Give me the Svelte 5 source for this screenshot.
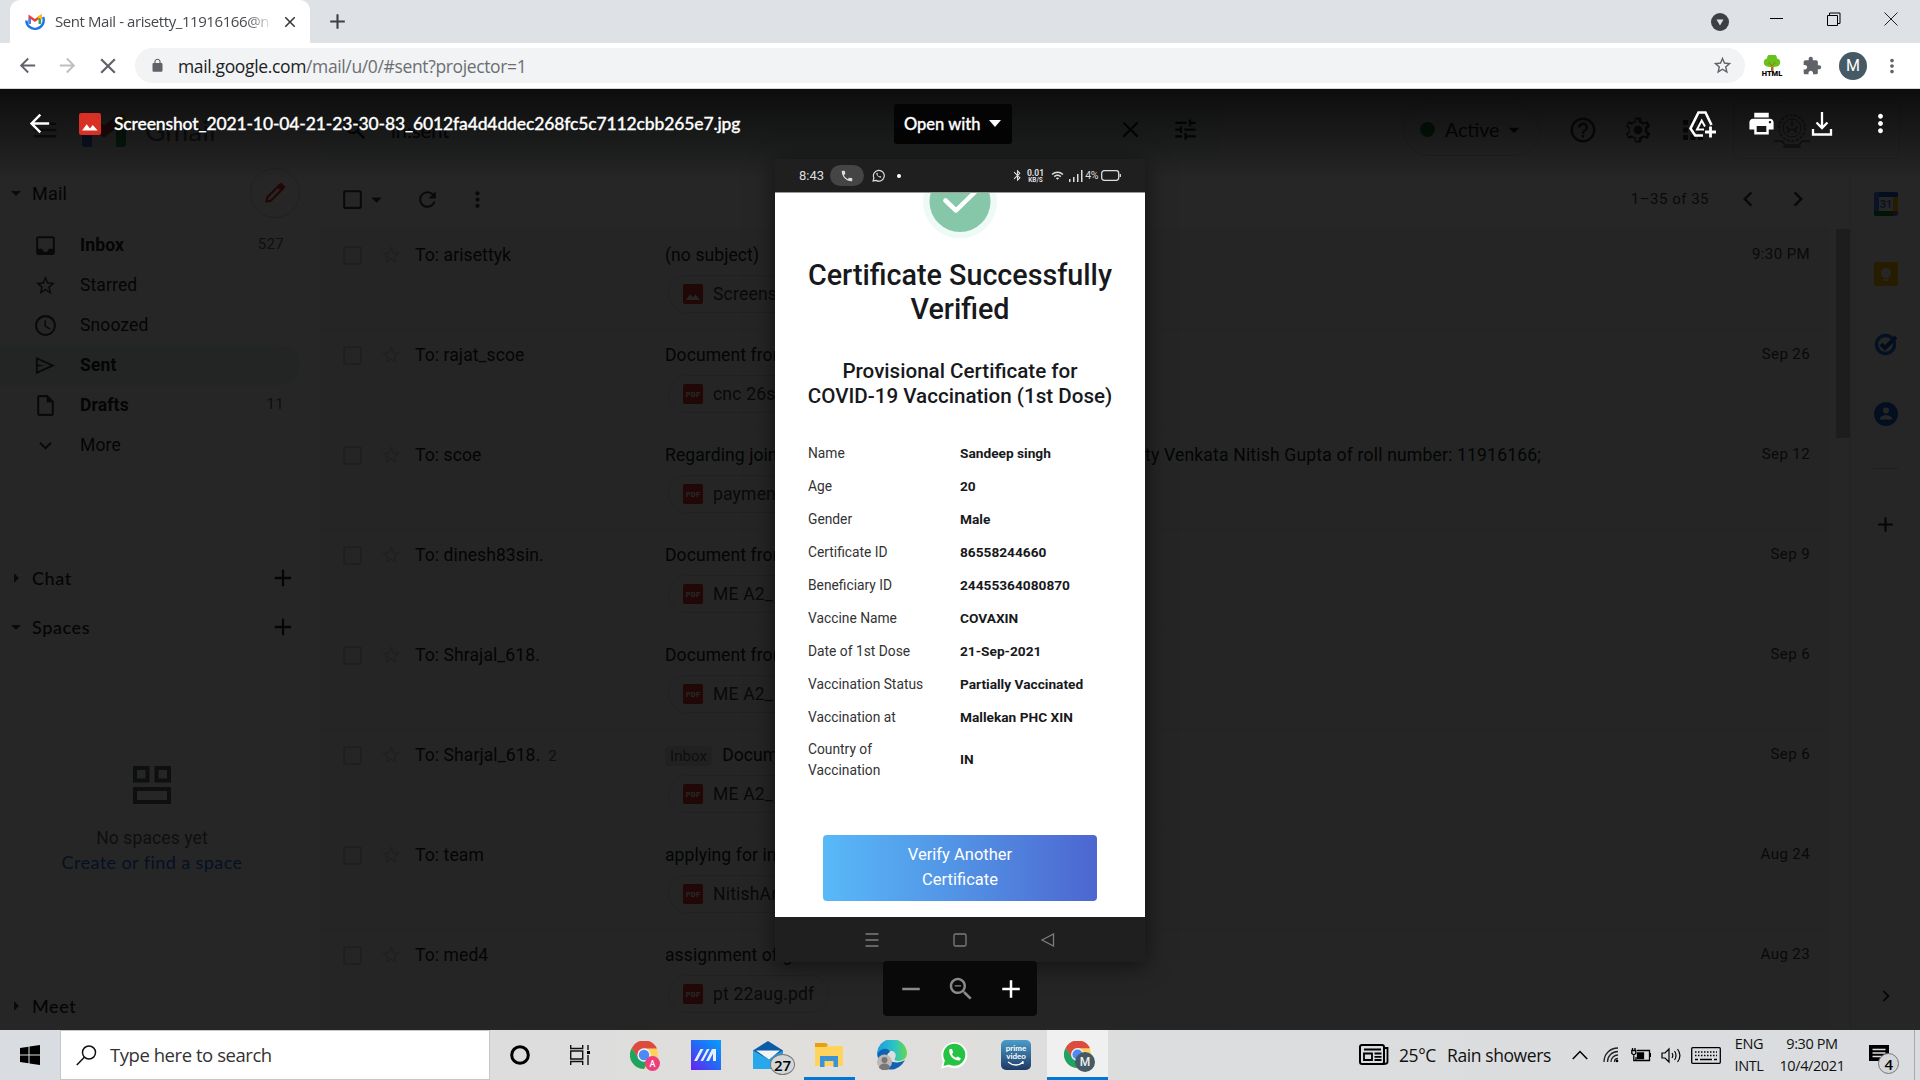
<script>
  const navItems = [
    { icon: 'inbox', label: 'Inbox', bold: true, count: '527' },
    { icon: 'star', label: 'Starred' },
    { icon: 'clock', label: 'Snoozed' },
    { icon: 'send', label: 'Sent', bold: true, active: true },
    { icon: 'draft', label: 'Drafts', bold: true, count: '11' },
    { icon: 'down', label: 'More' }
  ];

  const mails = [
    { to: 'To: arisettyk', subject: '(no subject)', file: 'Screens', img: true, date: '9:30 PM' },
    { to: 'To: rajat_scoe', subject: 'Document from', file: 'cnc 26sep', date: 'Sep 26' },
    { to: 'To: scoe', subject: 'Regarding joining', tail: 'ty Venkata Nitish Gupta of roll number: 11916166;', file: 'payment', date: 'Sep 12' },
    { to: 'To: dinesh83sin.', subject: 'Document from', file: 'ME A2_', date: 'Sep 9' },
    { to: 'To: Shrajal_618.', subject: 'Document from', file: 'ME A2_', date: 'Sep 6' },
    { to: 'To: Sharjal_618.', thread: '2', tag: 'Inbox', subject: 'Document', file: 'ME A2_', date: 'Sep 6' },
    { to: 'To: team', subject: 'applying for int', file: 'NitishAr', date: 'Aug 24' },
    { to: 'To: med4', subject: 'assignment of g', file: 'pt 22aug.pdf', short: true, date: 'Aug 23' }
  ];

  const details = [
    ['Name', 'Sandeep singh'],
    ['Age', '20'],
    ['Gender', 'Male'],
    ['Certificate ID', '86558244660'],
    ['Beneficiary ID', '24455364080870'],
    ['Vaccine Name', 'COVAXIN'],
    ['Date of 1st Dose', '21-Sep-2021'],
    ['Vaccination Status', 'Partially Vaccinated'],
    ['Vaccination at', 'Mallekan PHC XIN']
  ];

  // Single-colour glyphs on a 24-unit grid
  const glyphs = {
    back: 'M20 11H7.83l5.59-5.59L12 4l-8 8 8 8 1.41-1.41L7.83 13H20v-2z',
    forward: 'M12 4l-1.41 1.41L16.17 11H4v2h12.17l-5.58 5.59L12 20l8-8z',
    close: 'M19 6.41L17.59 5 12 10.59 6.41 5 5 6.41 10.59 12 5 17.59 6.41 19 12 13.41 17.59 19 19 17.59 13.41 12z',
    plus: 'M19 13h-6v6h-2v-6H5v-2h6V5h2v6h6v2z',
    minus: 'M19 13H5v-2h14v2z',
    lock: 'M18 8h-1V6c0-2.76-2.24-5-5-5S7 3.24 7 6v2H6c-1.1 0-2 .9-2 2v10c0 1.100.9 2 2 2h12c1.100 0 2-.9 2-2V10c0-1.100-.9-2-2-2zM8.900 6c0-1.710 1.390-3.100 3.100-3.100s3.100 1.390 3.100 3.100v2H8.900V6z',
    star: 'M22 9.240l-7.190-.62L12 2 9.190 8.630 2 9.240l5.460 4.730L5.820 21 12 17.270 18.180 21l-1.630-7.030L22 9.240zM12 15.400l-3.760 2.270 1-4.280-3.320-2.880 4.380-.38L12 6.100l1.710 4.040 4.380.38-3.320 2.880 1 4.280L12 15.400z',
    dots: 'M12 8c1.100 0 2-.9 2-2s-.9-2-2-2-2 .9-2 2 .9 2 2 2zm0 2c-1.100 0-2 .9-2 2s.9 2 2 2 2-.9 2-2-.9-2-2-2zm0 6c-1.100 0-2 .9-2 2s.9 2 2 2 2-.9 2-2-.9-2-2-2z',
    puzzle: 'M20.500 11H19V7c0-1.100-.9-2-2-2h-4V3.500C13 2.120 11.880 1 10.500 1S8 2.120 8 3.500V5H4c-1.100 0-1.990.9-1.990 2v3.800H3.500c1.490 0 2.700 1.210 2.700 2.700s-1.210 2.700-2.700 2.700H2V20c0 1.100.9 2 2 2h3.800v-1.500c0-1.490 1.210-2.700 2.700-2.700s2.700 1.210 2.700 2.700V22H17c1.100 0 2-.9 2-2v-4h1.500c1.380 0 2.500-1.120 2.500-2.500S21.880 11 20.500 11z',
    menu: 'M3 18h18v-2H3v2zm0-5h18v-2H3v2zm0-7v2h18V6H3z',
    search: 'M15.500 14h-.79l-.28-.27C15.410 12.590 16 11.110 16 9.500 16 5.910 13.090 3 9.500 3S3 5.910 3 9.500 5.910 16 9.500 16c1.610 0 3.090-.59 4.230-1.570l.27.28v.79l5 4.990L20.490 19l-4.990-5zm-6 0C7.010 14 5 11.990 5 9.500S7.010 5 9.500 5 14 7.010 14 9.500 11.990 14 9.500 14z',
    zoomout: 'M15.500 14h-.79l-.28-.27C15.410 12.590 16 11.110 16 9.500 16 5.910 13.090 3 9.500 3S3 5.910 3 9.500 5.910 16 9.500 16c1.610 0 3.090-.59 4.230-1.570l.27.28v.79l5 4.990L20.490 19l-4.990-5zm-6 0C7.010 14 5 11.990 5 9.500S7.010 5 9.500 5 14 7.010 14 9.500 11.990 14 9.500 14zM7 9h5v1H7z',
    tune: 'M3 17v2h6v-2H3zM3 5v2h10V5H3zm10 16v-2h8v-2h-8v-2h-2v6h2zM7 9v2H3v2h4v2h2V9H7zm14 4v-2H11v2h10zm-6-4h2V7h4V5h-4V3h-2v6z',
    help: 'M11 18h2v-2h-2v2zm1-16C6.480 2 2 6.480 2 12s4.480 10 10 10 10-4.480 10-10S17.520 2 12 2zm0 18c-4.410 0-8-3.590-8-8s3.590-8 8-8 8 3.590 8 8-3.590 8-8 8zm0-14c-2.210 0-4 1.790-4 4h2c0-1.100.9-2 2-2s2 .9 2 2c0 2-3 1.750-3 5h2c0-2.250 3-2.500 3-5 0-2.210-1.790-4-4-4z',
    apps: 'M4 8h4V4H4v4zm6 12h4v-4h-4v4zm-6 0h4v-4H4v4zm0-6h4v-4H4v4zm6 0h4v-4h-4v4zm6-10v4h4V4h-4zm-6 4h4V4h-4v4zm6 6h4v-4h-4v4zm0 6h4v-4h-4v4z',
    print: 'M19 8H5c-1.660 0-3 1.340-3 3v6h4v4h12v-4h4v-6c0-1.660-1.340-3-3-3zm-3 11H8v-5h8v5zm3-7c-.55 0-1-.45-1-1s.45-1 1-1 1 .45 1 1-.45 1-1 1zm-1-9H6v4h12V3z',
    inbox: 'M19 3H5c-1.100 0-2 .9-2 2v14c0 1.100.9 2 2 2h14c1.100 0 2-.9 2-2V5c0-1.100-.9-2-2-2zm0 12h-4c0 1.660-1.350 3-3 3s-3-1.340-3-3H5V5h14v10z',
    clock: 'M11.990 2C6.470 2 2 6.480 2 12s4.470 10 9.990 10C17.520 22 22 17.520 22 12S17.520 2 11.990 2zM12 20c-4.420 0-8-3.580-8-8s3.580-8 8-8 8 3.580 8 8-3.580 8-8 8zm.5-13H11v6l5.250 3.150.75-1.230-4.500-2.670z',
    send: 'M2 3v18l20-9L2 3zm2 3.100L17.100 12 4 17.900V13l7-1-7-1V6.100z',
    draft: 'M14 2H6c-1.100 0-2 .9-2 2v16c0 1.100.9 2 2 2h12c1.100 0 2-.9 2-2V8l-6-6zM6 20V4h7v5h5v11H6z',
    down: 'M7.410 8.590L12 13.170l4.590-4.580L18 10l-6 6-6-6z',
    left: 'M15.410 7.410L14 6l-6 6 6 6 1.410-1.410L10.830 12z',
    right: 'M10 6L8.590 7.410 13.170 12l-4.580 4.590L10 18l6-6z',
    square: 'M19 5v14H5V5h14m0-2H5c-1.100 0-2 .9-2 2v14c0 1.100.9 2 2 2h14c1.100 0 2-.9 2-2V5c0-1.100-.9-2-2-2z',
    refresh: 'M17.650 6.350C16.200 4.900 14.210 4 12 4c-4.420 0-7.990 3.580-7.990 8s3.570 8 7.990 8c3.730 0 6.840-2.550 7.730-6h-2.080c-.82 2.330-3.040 4-5.650 4-3.310 0-6-2.690-6-6s2.690-6 6-6c1.660 0 3.140.69 4.220 1.780L13 11h7V4l-2.350 2.350z',
    caret: 'M7 10l5 5 5-5z',
    caretRight: 'M10 17l5-5-5-5z',
    phone: 'M6.620 10.790c1.440 2.830 3.760 5.140 6.590 6.590l2.200-2.200c.27-.27.67-.36 1.020-.24 1.120.37 2.330.57 3.570.57.55 0 1 .45 1 1V20c0 .55-.45 1-1 1-9.390 0-17-7.610-17-17 0-.55.45-1 1-1h3.500c.55 0 1 .45 1 1 0 1.250.2 2.450.57 3.570.11.35.03.74-.25 1.020l-2.200 2.200z',
    bluetooth: 'M17.710 7.710L12 2h-1v7.590L6.410 5 5 6.410 10.590 12 5 17.590 6.410 19 11 14.410V22h1l5.710-5.710-4.300-4.290 4.300-4.290zM13 5.830l1.880 1.880L13 9.590V5.830zm1.880 10.460L13 18.170v-3.760l1.880 1.880z',
    wifi: 'M1 9l2 2c5-5 13-5 18 0l2-2C16.900 2.900 7.100 2.900 1 9zm8 8l3 3 3-3c-1.700-1.700-4.300-1.700-6 0zm-4-4l2 2c2.800-2.800 7.200-2.800 10 0l2-2C15.100 9.100 8.900 9.100 5 13z',
    gear: 'M19.430 12.980c.04-.32.07-.64.07-.98s-.03-.66-.07-.98l2.110-1.650c.19-.15.24-.42.12-.64l-2-3.460c-.12-.22-.39-.3-.61-.22l-2.490 1c-.52-.4-1.080-.73-1.690-.98l-.38-2.650C14.460 2.180 14.250 2 14 2h-4c-.25 0-.46.18-.49.42l-.38 2.650c-.61.25-1.170.59-1.690.98l-2.490-1c-.23-.09-.49 0-.61.22l-2 3.460c-.13.22-.07.49.12.64l2.110 1.650c-.04.32-.07.65-.07.98s.03.66.07.98l-2.110 1.650c-.19.15-.24.42-.12.64l2 3.460c.12.22.39.3.61.22l2.490-1c.52.4 1.080.73 1.690.98l.38 2.650c.03.24.24.42.49.42h4c.25 0 .46-.18.49-.42l.38-2.650c.61-.25 1.170-.59 1.690-.98l2.490 1c.23.09.49 0 .61-.22l2-3.460c.12-.22.07-.49-.12-.64l-2.110-1.650zm-2-1.700c.05.31.05.52.05.72s-.03.43-.05.73l-.14 1.130 1.970 1.520-1 1.750-2.330-.94-.89.69c-.43.32-.84.56-1.250.73l-1.060.43-.35 2.470h-1.900l-.35-2.470-1.060-.43c-.43-.18-.83-.41-1.230-.71l-.91-.7-2.330.94-1-1.750 1.970-1.520-.14-1.130c-.03-.31-.05-.54-.05-.74s.02-.43.05-.73l.14-1.130L3.550 8.640l1-1.750 2.330.94.89-.69c.43-.32.84-.56 1.250-.73l1.060-.43.35-2.470h1.900l.35 2.470 1.060.43c.43.18.83.41 1.230.71l.91.7 2.330-.94 1 1.750-1.970 1.520.14 1.130zM12 8.500a3.500 3.500 0 1 0 0 7 3.500 3.500 0 0 0 0-7z'
  };
</script>

{#snippet icon(name, size = 24)}
  <svg class="ic" width={size} height={size} viewBox="0 0 24 24" fill="currentColor"><path d={glyphs[name]} /></svg>
{/snippet}

{#snippet fileBadge(img, size = 20)}
  <svg class="ic" width={size} height={size} viewBox="0 0 20 20">
    <rect width="20" height="20" rx="2" fill="#d93025" />
    {#if img}
      <path d="M3 16l4.200-6 2.800 3.600 2.500-3.200L17 16z" fill="#fff" />
    {:else}
      <text x="10" y="13" text-anchor="middle" font-family="Roboto" font-weight="900" font-size="7.500" fill="#fff">PDF</text>
    {/if}
  </svg>
{/snippet}

{#snippet chrome(size)}
  <svg class="ic" width={size} height={size} viewBox="0 0 48 48">
    <circle cx="24" cy="24" r="24" fill="#ffd25f" />
    <path d="M24 13h22.300A24 24 0 0 0 3.200 12l11 19z" fill="#dd4b3e" />
    <path d="M3.200 12A24 24 0 0 0 24 48l10-18.500L24 35 14.500 30z" fill="#1ea362" />
    <circle cx="24" cy="24" r="11.500" fill="#f1f1f1" />
    <circle cx="24" cy="24" r="9" fill="#4c8bf5" />
  </svg>
{/snippet}

<div class="screen">
  <header class="tabs">
    <div class="tab">
      <svg class="ic" width="20" height="20" viewBox="0 0 20 20" fill="none">
        <path d="M1.300 8.500a8.700 8.700 0 1 0 16.800-3.500" stroke="#1a73e8" stroke-width="2.400" />
        <path d="M4.700 11.500V4.800l5.200 3.700 5-3.700v6.700" stroke="#ea4335" stroke-width="2.400" />
        <path d="M4.700 12V6.500" stroke="#4285f4" stroke-width="2.400" /><path d="M14.900 12V6.500" stroke="#34a853" stroke-width="2.400" />
        <path d="M13.200 6l2.800-2.200V7" stroke="#fbbc04" stroke-width="2" />
      </svg>
      <span class="tab-title">Sent Mail - arisetty_11916166@n</span>
      <span class="tab-x">{@render icon('close', 18)}</span>
    </div>
    <span class="new-tab">{@render icon('plus', 25)}</span>
    <div class="win">
      <svg class="ic" width="18" height="18" viewBox="0 0 18 18"><circle cx="9" cy="9" r="9" fill="#3c4043" /><path d="M5.500 6.500h7L9 12.500z" fill="#dee1e6" /></svg>
      <svg class="ic w2" width="14" height="14" viewBox="0 0 14 14" stroke="#000"><path d="M0 6.500h13" /></svg>
      <svg class="ic w2" width="14" height="14" viewBox="0 0 14 14" fill="none" stroke="#000"><path d="M.5 3.500h10v10H.5zM2.500 3.500v-2.500h10.500v10.500h-2.500" /></svg>
      <svg class="ic w2" width="14" height="14" viewBox="0 0 14 14" stroke="#222"><path d="M.5.5l13 13M13.500.5L.5 13.500" /></svg>
    </div>
  </header>

  <div class="bar">
    <div class="nav-btns">
      {@render icon('back', 23)}
      <span class="dim">{@render icon('forward', 23)}</span>
      {@render icon('close', 26)}
    </div>
    <div class="omni">
      {@render icon('lock', 15)}
      <span class="url"><b>mail.google.com</b>/mail/u/0/#sent?projector=1</span>
      <span class="omni-star">{@render icon('star', 21)}</span>
    </div>
    <div class="ext">
      <svg class="ic" width="22" height="22" viewBox="0 0 22 22">
        <path d="M10 8h2.500v8H10z" fill="#b5651d" /><path d="M3 8a3.500 3.500 0 0 1 3-4.500 5 5 0 0 1 10 0A3.500 3.500 0 0 1 19 8c0 3-3 4-8 4S3 11 3 8z" fill="#67c21a" />
        <path d="M7.500 7l3.500 4 3.500-4" stroke="#b5651d" fill="none" />
        <text x="11" y="21" text-anchor="middle" font-family="Roboto" font-weight="900" font-size="7.500">HTML</text>
      </svg>
      {@render icon('puzzle', 20)}
      <span class="avatar">M</span>
      {@render icon('dots', 22)}
    </div>
  </div>

  <div class="stage">
    <div class="gmail">
      <div class="ghead">
        <div class="brand">
          {@render icon('menu', 30)}
          <svg class="ic logo" width="44" height="34" viewBox="0 0 44 34">
            <path d="M0 5v26a3 3 0 0 0 3 3h7V14z" fill="#4285f4" /><path d="M44 5v26a3 3 0 0 1-3 3h-7V14z" fill="#34a853" />
            <path d="M0 5c0-5 5-6 8-3l14 10.500L36 2v12L22 24.500 0 9z" fill="#ea4335" /><path d="M34 3.500C39-1 44 0 44 5v3l-10 8z" fill="#fbbc04" />
          </svg>
          <span class="gname">Gmail</span>
        </div>
        <div class="gsearch">
          {@render icon('search', 27)}
          <span class="query">in:sent</span>
          {@render icon('close', 27)}
          <span class="tune">{@render icon('tune', 27)}</span>
        </div>
        <div class="status"><i></i><span>Active</span>{@render icon('caret', 26)}</div>
        <div class="gtools">
          {@render icon('help', 30)}{@render icon('gear', 30)}{@render icon('apps', 30)}
        </div>
        <div class="org">
          <svg class="ic" width="38" height="36" viewBox="0 0 38 36" fill="none" stroke="#8c6a64" stroke-width="1.600">
            <circle cx="19" cy="15" r="13" stroke-dasharray="3 1.500" /><circle cx="19" cy="15" r="9" stroke-width="1" />
            <path d="M15 20c0-5 8-5 8 0M19 8v5M13 14l3 2M25 14l-3 2M1 28h8l3 4h14l3-4h8M10 34h18" />
          </svg>
        </div>
      </div>

      <div class="gbody">
        <aside>
          <div class="sec mail"><span class="tri">{@render icon('caret', 24)}</span><span>Mail</span>
            <span class="compose"><svg class="ic" width="24" height="24" viewBox="0 0 24 24" fill="none" stroke="#d93025" stroke-width="2.200"><path d="M3.500 20.500l.8-4.300L15 5.500l3.500 3.500L7.800 19.700z" /><path d="M16 4.500l2-1.500 3 3-1.500 2z" fill="#d93025" /></svg></span>
          </div>
          <nav>
            {#each navItems as n}
              <div class="item" class:bold={n.bold} class:active={n.active}>
                {@render icon(n.icon, n.icon === 'star' || n.icon === 'send' ? 23 : 25)}
                <span class="lbl">{n.label}</span><span class="cnt">{n.count ?? ''}</span>
              </div>
            {/each}
          </nav>
          <div class="sec chat"><span class="tri">{@render icon('caretRight', 24)}</span><span>Chat</span><span class="add">{@render icon('plus', 28)}</span></div>
          <div class="sec"><span class="tri">{@render icon('caret', 24)}</span><span>Spaces</span><span class="add">{@render icon('plus', 28)}</span></div>
          <div class="empty">
            <svg class="ic" width="38" height="38" viewBox="0 0 38 38" fill="none" stroke="#5f6368" stroke-width="4"><rect x="2" y="2" width="12.500" height="12.500" /><rect x="23.500" y="2" width="12.500" height="12.500" /><rect x="2" y="23" width="34" height="13" /></svg>
            <p>No spaces yet</p>
            <p class="link">Create or find a space</p>
          </div>
          <div class="sec meet"><span class="tri">{@render icon('caretRight', 24)}</span><span>Meet</span></div>
        </aside>

        <main>
          <div class="ltool">
            {@render icon('square', 25)}
            <span class="lt1">{@render icon('caret', 25)}</span>
            <span class="lt2">{@render icon('refresh', 25)}</span>
            <span class="lt3">{@render icon('dots', 25)}</span>
            <span class="range">1–35 of 35</span>
            {@render icon('left', 30)}
            <span class="lt4">{@render icon('right', 30)}</span>
          </div>
          <div class="rows">
            {#each mails as m}
              <div class="row">
                <div class="line">
                  <span class="faint">{@render icon('square', 25)}</span>
                  <span class="faint st">{@render icon('star', 22)}</span>
                  <span class="to">{m.to}{#if m.thread}<small>{m.thread}</small>{/if}</span>
                  <span class="subj">{#if m.tag}<em>{m.tag}</em>{/if}{m.subject}</span>
                  <span class="tail">{m.tail ?? ''}</span>
                  <span class="date">{m.date}</span>
                </div>
                <div class="chip" class:short={m.short}>{@render fileBadge(m.img)}<span>{m.file}</span></div>
              </div>
            {/each}
          </div>
        </main>
        <div class="scroll"><i></i></div>
        <div class="side">
          <svg class="ic" width="24" height="24" viewBox="0 0 24 24"><rect width="24" height="24" rx="2" fill="#4285f4" /><path d="M19 5h5v14h-5z" fill="#fbbc04" /><path d="M0 19h19v5H2a2 2 0 0 1-2-2z" fill="#188038" /><path d="M19 19h5l-5 5z" fill="#ea4335" /><path d="M5 5h14v14H5z" fill="#fff" /><path d="M5 0h17a2 2 0 0 1 2 2v3H5z" fill="#1967d2" /><text x="12" y="16" text-anchor="middle" font-family="Roboto" font-size="11" font-weight="500" fill="#1a73e8">31</text></svg>
          <svg class="ic" width="24" height="24" viewBox="0 0 24 24"><rect width="24" height="24" rx="2" fill="#fbbc04" /><circle cx="12" cy="11" r="5" fill="#fff" /><path d="M9.500 14h5v2h-5zM9.500 17h5v2h-5z" fill="#fff" /></svg>
          <svg class="ic" width="24" height="24" viewBox="0 0 24 24" fill="none"><circle cx="11.500" cy="12.500" r="9" stroke="#1a73e8" stroke-width="3.500" /><path d="M7 12l4 4L22 5" stroke="#1558b8" stroke-width="4" /></svg>
          <svg class="ic" width="24" height="24" viewBox="0 0 24 24"><circle cx="12" cy="12" r="12" fill="#1967d2" /><circle cx="12" cy="8.500" r="3" fill="#fff" /><path d="M6 17.500v-1c0-2 3-3.300 6-3.300s6 1.300 6 3.300v1z" fill="#fff" /></svg>
          <hr />
          <span class="sp">{@render icon('plus', 25)}</span>
          <span class="sb">{@render icon('right', 22)}</span>
        </div>
      </div>
    </div>

    <div class="veil">
      <div class="vbar">
        {@render icon('back', 29)}
        <svg class="ic vfile" width="22" height="22" viewBox="0 0 20 20"><rect width="20" height="20" rx="2" fill="#d93025" /><path d="M2.800 16l4.200-5.800 3 4 2.500-3.200L17 16z" fill="#fff" /></svg>
        <span class="fname">Screenshot_2021-10-04-21-23-30-83_6012fa4d4ddec268fc5c7112cbb265e7.jpg</span>
        <span class="open"><span>Open with</span><svg class="ic" width="12" height="7" viewBox="0 0 12 7"><path d="M0 0h12L6 7z" fill="#fff" /></svg></span>
        <div class="vtools">
          <svg class="ic" width="30" height="30" viewBox="0 0 30 30" fill="none" stroke="#fff" stroke-width="2.600">
            <path d="M16 26.500H8.200L3.500 19.500 11.500 3.500h7L24.500 16" /><path d="M17 20.500H10L14.700 11.500 18 17.500" stroke-width="2" /><path d="M23.500 17.500v11M18 23h11" stroke-width="2.800" />
          </svg>
          {@render icon('print', 29)}
          <svg class="ic" width="24" height="26" viewBox="0 0 24 26" fill="none" stroke="#fff" stroke-width="2.300"><path d="M12 1v16M6.500 11.500L12 17l5.500-5.500M3 18v5.500h18V18" /></svg>
          {@render icon('dots', 29)}
        </div>
      </div>

      <div class="phone">
        <div class="pstat">
          <span class="time">8:43</span>
          <span class="call">{@render icon('phone', 14)}</span>
          <svg class="ic wa" width="13" height="13" viewBox="0 0 24 24" fill="none" stroke="#ddd" stroke-width="2.200"><path d="M2 22l1.500-5.500A10 10 0 1 1 7.500 21z" /><path d="M8 7.500c0 5 4 8.500 8.500 8.500l.5-2-2.500-1.200-1.500 1c-1.500-.6-2.300-1.500-3-3l1-1.300L10 7z" fill="#ddd" stroke="none" /></svg>
          <i class="pt"></i>
          <span class="bt">{@render icon('bluetooth', 13)}</span>
          <span class="kb"><b>0.01</b><b class="k2">KB/S</b></span>
          <span class="wf">{@render icon('wifi', 13)}</span>
          <svg class="ic" width="14" height="12" viewBox="0 0 14 12" fill="#ddd"><path d="M0 9h1.500v3H0zM4 7h1.500v5H4zM8 4h1.500v8H8zM12 0h1.500v12H12z" /></svg>
          <span class="pc">4%</span>
          <svg class="ic" width="20" height="11" viewBox="0 0 20 11" fill="none" stroke="#ddd" stroke-width="1.300"><rect x=".7" y=".7" width="17" height="9.600" rx="2.500" /><path d="M19.300 4v3" /></svg>
        </div>
        <div class="cert">
          <svg class="tick" width="76" height="47" viewBox="0 0 76 47"><circle cx="38" cy="8.500" r="37" fill="#eefaf5" /><circle cx="38" cy="8.500" r="30.500" fill="#87c7a9" /><path d="M23.500 7.500L34 17.500 53 -1" fill="none" stroke="#fff" stroke-width="4.500" stroke-linecap="round" stroke-linejoin="round" /></svg>
          <h1>Certificate Successfully Verified</h1>
          <h2><span>Provisional Certificate for</span><span>COVID-19 Vaccination (1st Dose)</span></h2>
          <dl>
            {#each details as [k, v]}<dt>{k}</dt><dd>{v}</dd>{/each}
            <dt class="two">Country of Vaccination</dt><dd class="two">IN</dd>
          </dl>
          <div class="verify"><span>Verify Another</span><span>Certificate</span></div>
        </div>
        <div class="pnav">
          <svg class="ic" width="14" height="14" viewBox="0 0 14 14" stroke="#7d7d7d" stroke-width="1.300"><path d="M.5 1h13M.5 7h13M.5 13h13" /></svg>
          <svg class="ic" width="14" height="14" viewBox="0 0 14 14" fill="none" stroke="#7d7d7d" stroke-width="1.300"><rect x="1" y="1" width="12" height="12" rx="1.500" /></svg>
          <svg class="ic" width="14" height="14" viewBox="0 0 14 14" fill="none" stroke="#7d7d7d" stroke-width="1.300"><path d="M1 7l11.500-6v12z" /></svg>
        </div>
      </div>

      <div class="zoomer">
        <span class="off">{@render icon('minus', 30)}</span><span class="off">{@render icon('zoomout', 30)}</span>{@render icon('plus', 30)}
      </div>
    </div>
  </div>

  <footer>
    <span class="start"><svg class="ic" width="20" height="20" viewBox="0 0 20 20"><path d="M0 3l8.500-1.200v7.700H0zM9.500 1.600L20 0v9.500H9.500zM0 10.500h8.500v7.700L0 17zM9.500 10.500H20V20L9.500 18.400z" /></svg></span>
    <div class="tsearch">
      <svg class="ic" width="21" height="21" viewBox="0 0 21 21" fill="none" stroke="#111" stroke-width="1.500"><circle cx="13" cy="7.500" r="6.500" /><path d="M8.300 12.200L.8 20" /></svg>
      <span>Type here to search</span>
    </div>
    <div class="apps">
      <span class="app"><svg class="ic" width="20" height="20" viewBox="0 0 20 20"><circle cx="10" cy="10" r="8.300" fill="none" stroke="#000" stroke-width="3" /></svg></span>
      <span class="app"><svg class="ic" width="20" height="20" viewBox="0 0 20 20" fill="none" stroke="#111" stroke-width="1.400"><path d="M.7 0v3.500h12V0M.7 6h12v8H.7zM.7 20v-3.500h12V20M18 0v5M18 10v10" /><path d="M17 6h3v3h-3z" fill="#000" stroke="none" /></svg></span>
      <span class="app chr">{@render chrome(28)}<b class="bd pink">A</b></span>
      <span class="app"><svg class="ic" width="30" height="30" viewBox="0 0 30 30"><defs><linearGradient id="mg" x1="0" y1="1" x2="1" y2="0"><stop offset="0" stop-color="#6a1ff0" /><stop offset=".5" stop-color="#2468f5" /><stop offset="1" stop-color="#05a0ff" /></linearGradient></defs><rect width="30" height="30" fill="url(#mg)" /><path d="M3 21L9.500 9h3L6 21zM9.500 21L16 9h2.500L12 21z" fill="#e8f0ff" /><path d="M15 21L21 9h4v12h-3v-7.500L18 21z" fill="#e8f0ff" /></svg></span>
      <span class="app"><svg class="ic" width="30" height="28" viewBox="0 0 30 28"><path d="M0 9.500L15 0l15 9.500V28H0z" fill="#0a5ba8" /><path d="M0 9.500V28h30V9.500L15 18z" fill="#1f9be4" /><path d="M3 9.500h24L16 18.500z" fill="#f4f4f4" /><path d="M0 9.500L30 28H0z" fill="#28a8ea" /></svg><b class="bd num">27</b></span>
      <span class="app run"><svg class="ic" width="28" height="24" viewBox="0 0 28 24"><path d="M0 0h11l2 3h15v20H0z" fill="#ffd35c" /><path d="M0 0h11l2 2-2 2H0z" fill="#e6a10c" /><path d="M5 24V13h18v11h-4.500v-6h-9v6z" fill="#3a93d6" /></svg></span>
      <span class="app"><svg class="ic" width="30" height="30" viewBox="0 0 30 30"><defs><linearGradient id="eg"><stop offset="0" stop-color="#1b9de2" /><stop offset=".6" stop-color="#2fc3c3" /><stop offset="1" stop-color="#65d84a" /></linearGradient></defs><path d="M0 15A15 15 0 0 1 30 13c0 6-5 8-9 8-3 0-4-1-3-3 2-3 0-7-4-7-7 0-9 7-6 14A15 15 0 0 1 0 15z" fill="url(#eg)" /><path d="M1 13C5 7 12 8 13 12c-5 2-3 9 3 10 4 1 9 0 12-2-4 8-13 12-20 8A15 15 0 0 1 1 13z" fill="#0f63b0" /><circle cx="7.500" cy="22" r="7.500" fill="#bdb8b5" /><circle cx="7.500" cy="20" r="3" fill="#777" /><path d="M2 28c0-6 11-6 11 0l-3 2H5z" fill="#777" /></svg></span>
      <span class="app"><svg class="ic" width="28" height="28" viewBox="0 0 28 28"><path d="M1 27.500l2-7A13 13 0 1 1 8 25.500z" fill="#fff" /><circle cx="14.300" cy="13.700" r="11" fill="#25c244" /><path d="M3.500 25l1.500-6 4 4.500z" fill="#25c244" /><path d="M9.500 8c-1.500 6 4.500 12 10 11.500 1-.3 1.500-2 1-2.500l-3-1.500-1.500 1.300c-2-.8-3.200-2.200-4-3.800l1.200-1.500L12 8z" fill="#fff" /></svg></span>
      <span class="app prime"><span class="pv">prime<br />video<svg class="ic" width="18" height="5" viewBox="0 0 18 5" fill="none" stroke="#fff" stroke-width="1.300"><path d="M1 1c5 4 11 4 15 0l-1-.5M16 1v2" /></svg></span></span>
      <span class="app run cur chr">{@render chrome(27)}<b class="bd dark">M</b></span>
    </div>
    <div class="tray">
      <svg class="ic news" width="30" height="22" viewBox="0 0 30 22" fill="none" stroke="#000" stroke-width="2"><rect x="1" y="1" width="24" height="19" rx="2" /><path d="M25.500 4h3v14c0 2-2 2-4 2H5M5 5.500h17M5 9.500h8v6.500H5zM15.500 9.500h7M15.500 12.800h7M15.500 16h7" stroke-width="1.800" /></svg>
      <span class="deg">25°C</span><span class="rain">Rain showers</span>
      <svg class="ic cr" width="16" height="10" viewBox="0 0 16 10" fill="none" stroke="#000" stroke-width="1.500"><path d="M.8 9L8 1.500 15.200 9" /></svg>
      <svg class="ic wf2" width="16" height="16" viewBox="0 0 16 16" fill="none" stroke="#222" stroke-width="1.300"><path d="M1 15C1 7 7 1 15 1M4.500 15C4.500 9 9 4.500 15 4.500M8 15c0-4 3-7 7-7M11.500 15c0-2 1.500-3.500 3.500-3.500" /><circle cx="14" cy="14" r="1.300" fill="#000" stroke="none" /></svg>
      <svg class="ic bat" width="20" height="14" viewBox="0 0 20 14" fill="none" stroke="#000" stroke-width="1.300"><path d="M6 2.500h12.500v10H5V9M19.500 5v4M.8 2.500h4v3l-2 1.500-2-1.500zM1.500 0v2.500M4 0v2.500M2.800 7v5.500H5" /><path d="M6.500 5h6v5.500h-6z" fill="#000" /></svg>
      <svg class="ic spk" width="20" height="17" viewBox="0 0 20 17" fill="none" stroke="#000" stroke-width="1.200"><path d="M1 6h3l4-4v13l-4-4H1zM11 6c1 1.500 1 3.500 0 5M13.500 4c2 2.500 2 6.500 0 9M16.500 2c3 4 3 9 0 13" /></svg>
      <svg class="ic kbd" width="30" height="17" viewBox="0 0 30 17" fill="none" stroke="#000" stroke-width="1.300"><rect x=".7" y=".7" width="28.600" height="15.600" rx="1" /><path d="M4 5h22M4 8.500h22" stroke-dasharray="1.500 1.500" /><path d="M4 12.500h3M9 12.500h12M23 12.500h3" /></svg>
      <span class="lang">ENG<br />INTL</span>
      <span class="clk">9:30 PM<br />10/4/2021</span>
      <span class="note"><svg class="ic" width="20" height="20" viewBox="0 0 20 20"><path d="M0 0h20v16h-6l-4 4v-4H0z" /><path d="M3.500 4.500h13M3.500 8h13M3.500 11.500h9" stroke="#ddd" stroke-width="1.300" /></svg><b class="bd num n4">4</b></span>
    </div>
  </footer>
</div>

<style>
  :global(body) { margin: 0; overflow: hidden; }
  .screen { width: 1920px; height: 1080px; display: flex; flex-direction: column; font-family: Roboto, sans-serif; overflow: hidden; }
  .ic { display: block; flex: none; }
  * { box-sizing: border-box; }
  span { display: block; white-space: nowrap; }

  .tabs { height: 43px; background: #dee1e6; display: flex; padding-left: 10px; flex: none; }
  .tab { width: 300px; background: #fff; border-radius: 10px 10px 0 0; display: flex; align-items: center; padding: 0 11px 0 15px; }
  .tab-title { width: 219px; margin-left: 10px; overflow: hidden; font: 15px 'Open Sans', sans-serif; letter-spacing: -0.42px; color: #45484c; mask-image: linear-gradient(90deg, #000 88%, transparent); padding-bottom: 2px; }
  .tab-x { margin-left: 8px; color: #333; }
  .new-tab { margin: 9px 0 0 15px; color: #3c4043; }
  .win { margin-left: auto; display: flex; gap: 43px; padding: 13px 22px 0 0; }
  .w2 { margin-top: -1px; }
  .win .ic:first-child { margin-right: -2px; }

  .bar { height: 46px; background: #fff; border-bottom: 1px solid #d5d7da; display: flex; align-items: center; flex: none; color: #5f6368; }
  .nav-btns { width: 135px; padding-left: 16px; display: flex; align-items: center; gap: 16.500px; }
  .dim { color: #bcbec1; }
  .omni { width: 1610px; height: 35px; background: #f1f3f4; border-radius: 18px; display: flex; align-items: center; padding: 0 12px 0 15px; }
  .url { font: 17.500px 'Open Sans', sans-serif; color: #6b6f73; margin-left: 13px; letter-spacing: -0.36px; }
  .url b { font-weight: 400; color: #202124; }
  .omni-star { margin-left: auto; }
  .ext { display: flex; align-items: center; flex: 1; padding-left: 16px; gap: 19px; }
  .avatar { width: 28px; height: 28px; border-radius: 50%; background: #455a64; color: #fff; font-size: 16px; text-align: center; line-height: 28px; margin-left: -2px; }
  .ext > .ic:last-child { margin-left: -5px; }

  .stage { position: relative; height: 941px; flex: none; background: #fff; }
  .gmail { height: 941px; display: flex; flex-direction: column; overflow: hidden; color: #202124; }
  .ghead { height: 81px; display: flex; align-items: center; flex: none; font-family: Lato, sans-serif; }
  .brand { width: 320px; padding-left: 30px; display: flex; align-items: center; color: #5f6368; }
  .logo { margin-left: 22px; }
  .gname { font-size: 28px; margin-left: 19px; }
  .gsearch { width: 902px; height: 60px; background: #f1f3f4; border-radius: 10px; display: flex; align-items: center; padding-left: 22px; }
  .query { width: 726px; margin-left: 22px; font-size: 20px; }
  .tune { margin-left: 28px; }
  .status { width: 137px; height: 53px; margin-left: 181px; border: 1px solid #dadce0; border-radius: 27px; display: flex; align-items: center; padding-left: 16px; font-size: 19.500px; }
  .status i { width: 15px; height: 15px; border-radius: 50%; background: #1e8e3e; margin-right: 10px; }
  .status span { width: 56px; }
  .gtools { display: flex; gap: 25px; margin-left: 28px; color: #3c4043; }
  .org { width: 167px; height: 59px; margin-left: 25px; border: 1px solid #dadce0; border-radius: 8px; padding: 12px 0 0 39px; }

  .gbody { flex: 1; display: flex; min-height: 0; }
  aside { width: 320px; display: flex; flex-direction: column; flex: none; }
  .sec { height: 50px; display: flex; align-items: center; padding: 0 0 2px 4px; font: 500 18px Lato, sans-serif; letter-spacing: .6px; flex: none; }
  .tri { width: 28px; color: #444; }
  .mail { height: 49px; margin-bottom: 6px; font: 400 18px Roboto, sans-serif; letter-spacing: .2px; padding-bottom: 3px; }
  .compose { width: 50px; height: 50px; border: 1px solid #d0d2d5; border-radius: 50%; display: grid; place-items: center; margin: 0 20px 0 auto; }
  .item { width: 300px; height: 40px; display: flex; align-items: center; border-radius: 0 20px 20px 0; font-size: 17.500px; }
  .item > .ic { width: 25px; margin-left: 33px; color: #3c4043; }
  .lbl { margin-left: 22px; letter-spacing: .12px; }
  .cnt { margin: -2px 16px 0 auto; font-size: 15px; color: #5f6368; letter-spacing: .3px; }
  .bold .lbl { font-weight: 700; }
  .active { background: #ebedf0; }
  .chat { margin-top: 88px; border-top: 1px solid #eee; }
  .add { margin: 0 23px 0 auto; }
  .empty { height: 328px; display: flex; flex-direction: column; align-items: center; padding: 113px 16px 0 0; font-size: 17.500px; color: #5f6368; }
  .empty p { margin: 0; line-height: 24px; letter-spacing: .12px; }
  .empty .ic { margin-bottom: 22px; }
  .empty .link { color: #1a73e8; font: 18px/24px Lato, sans-serif; letter-spacing: .42px; }
  .meet { border-top: 1px solid #eee; padding-bottom: 0; }

  main { width: 1509px; flex: none; }
  .ltool { height: 58px; display: flex; align-items: center; padding-left: 20px; color: #3c4043; }
  .lt1 { margin-left: -1px; }
  .lt2 { margin-left: 26px; }
  .lt3 { margin-left: 25px; }
  .range { margin: -1px 24px 0 auto; font-size: 15px; letter-spacing: .5px; color: #3c4043; }
  .lt4 { margin: 0 16px 0 20px; }
  .row { height: 100px; border-top: 1px solid #e7eaea; background: #f3f6f6; padding-top: 6px; }
  .line { height: 40px; display: flex; align-items: center; padding: 0 19px 0 20px; font-size: 17.500px; letter-spacing: .1px; }
  .faint { color: #cfd1d3; }
  .st { margin-left: 15px; }
  .to { width: 250px; margin-left: 13px; }
  small { font-size: 15px; margin-left: 8px; color: #5f6368; }
  .subj { width: 480px; }
  .tail { letter-spacing: .2px; }
  .subj em { font: 15px/20px Roboto, sans-serif; background: #ddd; border-radius: 4px; padding: 1px 5px; margin-right: 10px; color: #5f6368; }
  .date { margin-left: auto; font-size: 15px; letter-spacing: .4px; color: #3c4043; padding-bottom: 2px; }
  .chip { width: 260px; height: 38px; margin-left: 348px; border: 1px solid #dadce0; border-radius: 19px; display: flex; align-items: center; padding-left: 14px; gap: 10px; font-size: 17.500px; letter-spacing: .2px; color: #3c4043; }
  .chip.short { width: 161px; }
  .scroll { width: 21px; padding: 59px 0 0 7px; }
  .scroll i { display: block; width: 14px; height: 209px; background: #c1c1c1; }
  .side { width: 70px; border-left: 1px solid #eaeaea; display: flex; flex-direction: column; align-items: center; padding-top: 22px; gap: 46px; }
  .side hr { width: 25px; height: 1px; margin: -4px 0 0; border: 0; background: #ccc; }
  .sp { margin-top: -3px; }
  .sb { margin: auto 0 23px; }

  .veil { position: absolute; inset: 0; background: rgba(0, 0, 0, .85); }
  .vbar { height: 91px; background: linear-gradient(rgba(0, 0, 0, .66), transparent); display: flex; align-items: center; padding: 0 25px 22px 25px; color: #fff; }
  .vfile { margin-left: 25px; }
  .fname { width: 780px; margin-left: 13px; font: 500 17.500px Lato, sans-serif; letter-spacing: -0.13px; -webkit-text-stroke: .3px #fff; }
  .open { width: 118px; height: 40px; background: #040404; border-radius: 3px; display: flex; align-items: center; padding-left: 10px; gap: 9px; font: 500 16.500px Lato, sans-serif; -webkit-text-stroke: .3px #fff; }
  .open > span { width: 76px; }
  .vtools { margin-left: auto; padding-right: 0; display: flex; align-items: center; gap: 32px; }
  .vtools .ic:nth-child(2) { margin-left: -2px; }
  .vtools .ic:nth-child(3) { margin-left: 2px; }

  .phone { position: absolute; left: 775px; top: 70px; width: 370px; height: 803px; background: #1f1f1f; box-shadow: 0 3px 22px rgba(0, 0, 0, .55); display: flex; flex-direction: column; }
  .pstat { height: 33px; padding: 0 24px 0; display: flex; align-items: center; color: #ddd; flex: none; }
  .time { width: 31px; font-size: 13px; }
  .call { width: 34px; height: 21px; border-radius: 11px; background: #454545; display: grid; place-items: center; margin-left: 1px; }
  .wa { margin: 0 12px 0 8px; }
  .pt { width: 4px; height: 4px; border-radius: 50%; background: #fff; }
  .bt { margin-left: 110px; }
  .kb { width: 20px; margin-left: 2px; font-size: 8.500px; line-height: 8px; text-align: center; }
  .kb b { display: block; }
  .kb .k2 { font-size: 6.500px; line-height: 6px; }
  .wf { margin: 0 5px 0 6px; }
  .pc { width: 16px; margin-left: 2px; font-size: 10.500px; letter-spacing: -.5px; }
  .cert { height: 725px; background: #fff; color: #17191c; border-top: 1px solid #999; display: flex; flex-direction: column; align-items: center; flex: none; }
  h1 { margin: 18px 0 0; width: 320px; height: 68px; font: 500 28.700px/34px Roboto, sans-serif; text-align: center; }
  h2 { margin: 33px 0 0; font: 500 20.600px/25px Roboto, sans-serif; text-align: center; }
  dl { width: 304px; margin: 27px 0 0; display: grid; grid-template-columns: 152px 152px; grid-auto-rows: 33px; font-size: 13.800px; align-items: center; }
  dt { color: #333; white-space: nowrap; }
  dd { margin: 0; font-weight: 700; white-space: nowrap; font-size: 13.700px; }
  .two { line-height: 20.500px; height: 53px; align-self: start; padding-top: 6px; }
  dt.two { white-space: normal; width: 100px; }
  dd.two { line-height: 41px; }
  .verify { width: 274px; height: 66px; margin-top: 69px; border-radius: 4px; background: linear-gradient(90deg, #58b9f8, #5292e5 50%, #4d66d0); color: #fff; font-size: 16.500px; line-height: 24.500px; text-align: center; padding-top: 8px; }
  .pnav { flex: 1; display: flex; justify-content: center; align-items: center; gap: 74px; }
  .zoomer { position: absolute; left: 883px; top: 872px; width: 154px; height: 55px; background: #090909; border-radius: 4px; display: flex; align-items: center; gap: 20px; padding-left: 13px; color: #fff; }
  .off { color: #8a8a8a; }

  footer { height: 50px; flex: none; background: linear-gradient(90deg, #d9dce1, #dddddd 30%, #e1dfdc 42%, #dcddde 60%, #dadcdf); display: flex; color: #111; }
  .start { width: 60px; display: grid; place-items: center; }
  .tsearch { width: 430px; height: 50px; background: #fff; border: 1px solid #c4c6c8; display: flex; align-items: center; padding-left: 15px; gap: 13px; font: 18.500px 'Open Sans', sans-serif; letter-spacing: -.45px; color: #333; }
  .tsearch span { padding-bottom: 1px; }
  .apps { display: flex; width: 620px; }
  .app { width: 62px; display: grid; place-items: center; position: relative; }
  .app:nth-child(1) { width: 60px; }
  .app:nth-child(2) { width: 60px; }
  .app:nth-child(3) { width: 67px; }
  .app:nth-child(4) { width: 58px; }
  .app:nth-child(5) { width: 66px; }
  .run { border-bottom: 3px solid #0078d7; padding-top: 2px; }
  .app:nth-child(6) { width: 51px; margin: 0 6px 0 3px; padding-right: 2px; }
  .cur { background: #f0f0f0; margin-left: 0; width: 61px; }
  .bd { position: absolute; border-radius: 50%; display: grid; place-items: center; font-weight: 500; }
  .pink { width: 15px; height: 15px; right: 17px; bottom: 9px; background: #ec407a; color: #fff; font-size: 9px; }
  .num { width: 25px; height: 21px; right: 6px; bottom: 5px; background: #d4d6d8; border: 1px solid #777; font: 600 15px 'Open Sans', sans-serif; color: #000; }
  .dark { width: 20px; height: 20px; right: 13px; bottom: 5px; background: #455a64; color: #eee; font-size: 12px; }
  .pv { width: 30px; height: 30px; border-radius: 5px; background: linear-gradient(#4a9cc9, #1f3a66); color: #fff; font: 700 8px/7.500px Lato, sans-serif; text-align: center; padding-top: 5px; }
  .pv .ic { margin: 1px auto; }
  .tray { display: flex; align-items: center; margin-left: 249px; font: 17.500px 'Open Sans', sans-serif; letter-spacing: -.4px; border-right: 1px solid #aaa; width: 556px; }
  .deg { width: 48px; margin-left: 10px; }
  .rain { width: 105px; }
  .cr { margin-left: 20px; }
  .wf2 { margin-left: 15px; }
  .bat { margin-left: 12px; }
  .spk { margin-left: 10px; }
  .kbd { margin-left: 10px; }
  .lang { width: 56px; text-align: center; font-size: 14.500px; line-height: 22px; }
  .clk { width: 70px; text-align: center; font-size: 14.500px; line-height: 22px; }
  .note { position: relative; margin-left: 22px; }
  .n4 { right: -10px; bottom: -9px; width: 21px; }
</style>
